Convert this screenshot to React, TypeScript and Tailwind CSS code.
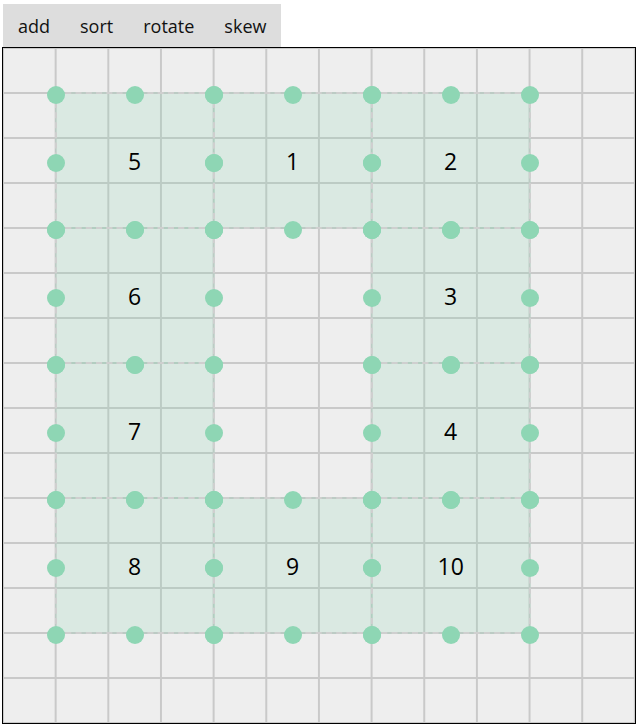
import React from 'react';

// board is 12 x 15 cells
const CW = 632 / 12;
const CH = 45;

const blocks = [
  { n: 5, c: 1, r: 1 },
  { n: 1, c: 4, r: 1 },
  { n: 2, c: 7, r: 1 },
  { n: 6, c: 1, r: 4 },
  { n: 3, c: 7, r: 4 },
  { n: 7, c: 1, r: 7 },
  { n: 4, c: 7, r: 7 },
  { n: 8, c: 1, r: 10 },
  { n: 9, c: 4, r: 10 },
  { n: 10, c: 7, r: 10 },
];

const anchors = [
  [0, 0], [0.5, 0], [1, 0],
  [0, 0.5], [1, 0.5],
  [0, 1], [0.5, 1], [1, 1],
];

const actions = ['add', 'sort', 'rotate', 'skew'];

export default function App() {
  return (
    <div className="pl-[2px] pt-[4px] font-['Open_Sans','Noto_Sans',sans-serif] text-black">
      <div className="ml-px flex h-[43px] w-fit bg-[#ddd]">
        {actions.map((a) => (
          <button key={a} className="px-[15px] text-[18px] leading-none text-[#111]">
            {a}
          </button>
        ))}
      </div>

      <div className="relative h-[677px] w-[634px] overflow-hidden border border-black bg-[#eee] bg-[linear-gradient(to_right,#c9c9c9_2px,transparent_2px),linear-gradient(to_bottom,#c9c9c9_2px,transparent_2px)] bg-[size:52.6667px_45px] bg-[position:-1px_-1px]">
        {blocks.map((b) => (
          <div
            key={b.n}
            className="absolute flex items-center justify-center border-2 border-dashed border-[#cfcfcf] bg-[rgba(142,214,180,0.2)] text-[23px] leading-none"
            style={{ left: b.c * CW - 1, top: b.r * CH - 1, width: 3 * CW + 2, height: 3 * CH + 2 }}
          >
            <span className="pt-[1px]">{b.n}</span>
          </div>
        ))}

        {blocks.map((b) =>
          anchors.map(([fx, fy], i) => (
            <div
              key={`${b.n}-${i}`}
              className="absolute size-[18px] rounded-full bg-[#8ed6b4]"
              style={{ left: b.c * CW + fx * 3 * CW + 0.5 - 9, top: b.r * CH + fy * 3 * CH + 2 - 9 }}
            />
          ))
        )}
      </div>
    </div>
  );
}
